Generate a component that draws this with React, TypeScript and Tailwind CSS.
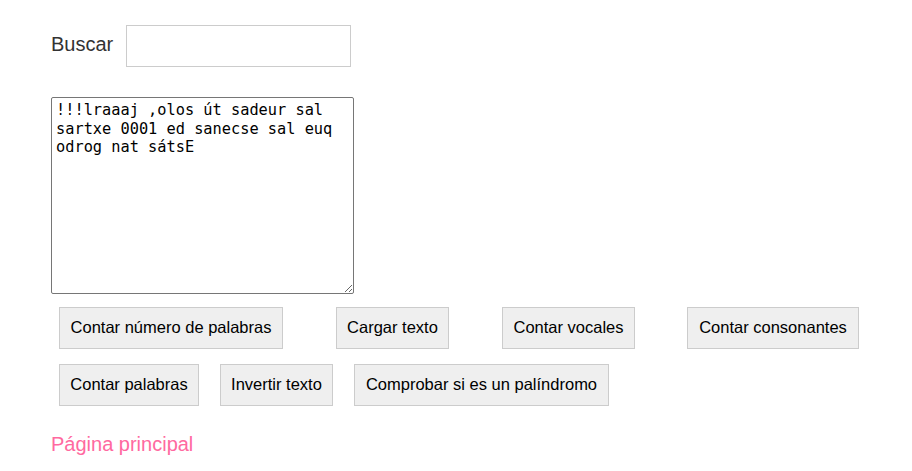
import { useState } from "react";

const TEXTO = "!!!lraaaj ,olos út sadeur sal sartxe 0001 ed sanecse sal euq odrog nat sátsE";

/** Botón gris de las acciones. */
const Boton = ({ label, className = "" }: { label: string; className?: string }) => (
  <button
    type="button"
    className={`h-[42px] px-0 pb-[2px] bg-[#efefef] border border-[#cccccc] whitespace-nowrap text-[16.5px] text-black text-center font-['Liberation_Sans',Arial,sans-serif] ${className}`}
  >
    {label}
  </button>
);

const App = () => {
  const [busqueda, setBusqueda] = useState("");
  const [texto, setTexto] = useState(TEXTO);

  return (
    <div className="min-h-[471px] bg-white pl-[51px] pt-[25px] font-['Liberation_Sans',Arial,sans-serif]">
      <div className="flex items-center">
        <label htmlFor="buscar" className="text-[20px] text-[#333333] mr-[13px] mb-[4px]">
          Buscar
        </label>
        <input
          id="buscar"
          type="text"
          value={busqueda}
          onChange={(e) => setBusqueda(e.target.value)}
          className="w-[225px] h-[42px] border border-[#cccccc] px-2 outline-none"
        />
      </div>

      <textarea
        value={texto}
        onChange={(e) => setTexto(e.target.value)}
        className="block mt-[30px] w-[303px] h-[197px] border border-[#767676] rounded-[2px] pl-[4px] pr-[2px] pt-[3px] pb-[1px] text-[15.3px] leading-[18.5px] text-black font-['DejaVu_Sans_Mono',monospace] outline-none"
      />

      <div className="flex mt-[13px] ml-[8px]">
        <Boton label="Contar número de palabras" className="w-[224px]" />
        <Boton label="Cargar texto" className="w-[113px] ml-[53px]" />
        <Boton label="Contar vocales" className="w-[133px] ml-[53px]" />
        <Boton label="Contar consonantes" className="w-[172px] ml-[52px]" />
      </div>

      <div className="flex mt-[15px] ml-[8px]">
        <Boton label="Contar palabras" className="w-[140px]" />
        <Boton label="Invertir texto" className="w-[113px] ml-[21px]" />
        <Boton label="Comprobar si es un palíndromo" className="w-[255px] ml-[21px]" />
      </div>

      <a href="#" className="block mt-[23px] text-[20px] text-[#ff69a0] w-fit">
        Página principal
      </a>
    </div>
  );
};

export default App;
